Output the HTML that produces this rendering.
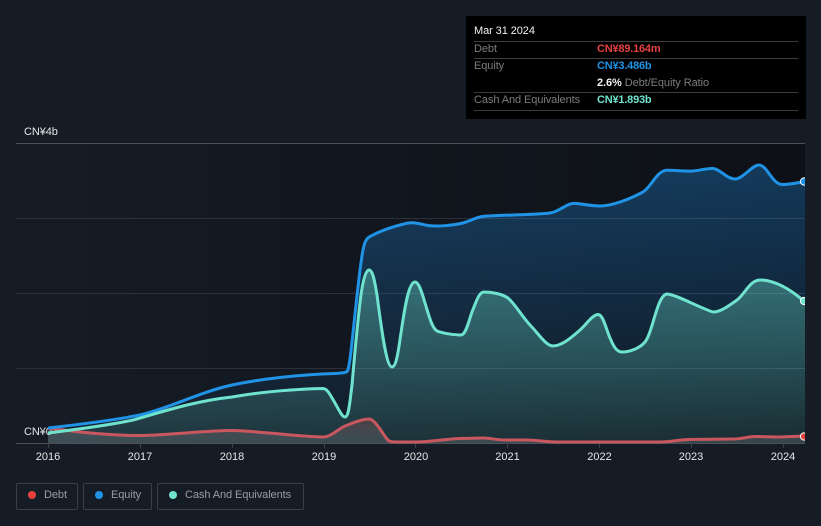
<!DOCTYPE html>
<html>
<head>
<meta charset="utf-8">
<style>
html,body{margin:0;padding:0;background:#151c26;}
body{width:821px;height:526px;overflow:hidden;position:relative;font-family:"Liberation Sans","Noto Sans CJK SC",sans-serif;}
svg{position:absolute;left:0;top:0;}
text{font-family:"Liberation Sans","Noto Sans CJK SC",sans-serif;}
.tip{position:absolute;left:466px;top:16px;width:340px;height:103px;background:#000;}
.hl{position:absolute;left:8px;width:324px;height:1px;background:#3d3d3d;}
.t{position:absolute;font-size:11px;line-height:14px;white-space:nowrap;color:#7d7d7d;letter-spacing:-.08px;}
.t.b{font-weight:bold;letter-spacing:-.2px;}
.lg{position:absolute;top:483px;height:25px;border:1px solid #3a3f49;border-radius:2px;box-sizing:content-box;}
.lg i{position:absolute;top:7px;left:11px;width:8px;height:8px;border-radius:50%;}
.lg span{position:absolute;left:27px;top:4px;font-size:11px;line-height:14px;color:#9a9da3;white-space:nowrap;letter-spacing:-.08px;}
</style>
</head>
<body>
<svg width="821" height="526" viewBox="0 0 821 526">
<defs>
<linearGradient id="bg" x1="0" x2="1" y1="0" y2="0"><stop offset="0" stop-color="#151c26"/><stop offset=".4" stop-color="#12171f"/><stop offset="1" stop-color="#0d1016"/></linearGradient>
<linearGradient id="eq" gradientUnits="userSpaceOnUse" x1="0" y1="165" x2="0" y2="443"><stop offset="0" stop-color="#2196f3" stop-opacity=".31"/><stop offset="1" stop-color="#2196f3" stop-opacity=".03"/></linearGradient>
<linearGradient id="ca" gradientUnits="userSpaceOnUse" x1="0" y1="270" x2="0" y2="443"><stop offset="0" stop-color="#6fe3ce" stop-opacity=".375"/><stop offset="1" stop-color="#6fe3ce" stop-opacity=".115"/></linearGradient>
<linearGradient id="de" gradientUnits="userSpaceOnUse" x1="0" y1="419" x2="0" y2="443"><stop offset="0" stop-color="#e64141" stop-opacity=".22"/><stop offset="1" stop-color="#ffffff" stop-opacity=".12"/></linearGradient>
<clipPath id="pc"><rect x="48" y="140" width="757" height="306"/></clipPath>
</defs>
<rect x="48" y="143" width="757" height="300" fill="url(#bg)"/>
<text x="24" y="135" font-size="11" letter-spacing="-.1" fill="#e6e6e6">CN¥4b</text>
<text x="24" y="435" font-size="11" letter-spacing="-.1" fill="#e6e6e6">CN¥0</text>
<g fill="#3c4049">
<rect x="16" y="143" width="789" height="1" fill="#4d5057"/>
<rect x="16" y="218" width="789" height="1" fill="#2b3039"/>
<rect x="16" y="293" width="789" height="1" fill="#2b3039"/>
<rect x="16" y="368" width="789" height="1" fill="#2b3039"/>
<rect x="16" y="443" width="789" height="1" fill="#4d5057"/>
<rect x="48" y="443" width="1" height="5"/><rect x="140" y="443" width="1" height="5"/><rect x="232" y="443" width="1" height="5"/><rect x="324" y="443" width="1" height="5"/><rect x="415" y="443" width="1" height="5"/><rect x="507" y="443" width="1" height="5"/><rect x="599" y="443" width="1" height="5"/><rect x="691" y="443" width="1" height="5"/><rect x="783" y="443" width="1" height="5"/>
</g>
<g clip-path="url(#pc)">
<path fill="url(#eq)" d="M48,428 C75,425 110,421 140,415 C170,408 200,392 232,385 C260,379 300,374.5 335,373.5 C342,373 346,373 347.5,371 C350,365 351,350 353,333 C356,305 360,265 363,250 C365,240 367,238 371,236 C380,231 395,226 408,223 C415,222 420,224 428,225.5 C438,227 455,225 463,223 C470,221 476,217.5 482,216.5 C495,215 530,215 545,213.5 C555,213 558,210 564,207 C569,204 572,203 577,203.5 C585,204.5 592,206 600,206 C612,206 630,199 643,192 C652,186 656,172 666,170.3 C675,170 685,171.5 693,171 C700,170.5 707,168 713,168.5 C720,169 727,179 735,179 C743,179 752,165 759,165 C767,165 772,184 782,184.5 C790,184.5 797,182.5 805,182 L805,443 L48,443 Z"/>
<path fill="url(#ca)" d="M48,433 C80,429 110,425 133,420 C165,411 195,401 232,397 C260,392 295,389 323,388.5 C328,389 330,395 335,403 C339,410 342,417 345,417 C349,417 350,400 352,385 C355,350 358,320 360,303 C362,285 365,270 369,270 C373,270 375,283 377,295 C381,325 386,367 392,367 C397,367 399,345 401,333 C405,305 409,282 415,282 C419,282 422,293 425,303 C429,316 432,328 437,331 C443,333.5 455,335 461,335 C466,335 469,320 472,312 C476,302 479,292 484,292 C492,292 502,294 508,298 C515,304 521,315 530,325 C538,333 546,346 553,346 C562,346 572,337 580,330 C586,325 592,315 598,314.5 C603,314 606,329 610,338 C613,345 616,352 622,352 C630,352 640,348 645,342 C653,332 657,295 667,294 C675,294 700,308 713,312 C720,312.5 730,305 737,300 C745,294 750,280 760,280 C775,280 790,289 805,302 L805,443 L48,443 Z"/>
<path fill="url(#de)" d="M48,428 C75,431.5 105,435.5 140,435.5 C170,435 205,430.5 232,430.5 C260,431 300,437 323,437 C330,437 336,431 343,427 C352,423 362,419 369,419 C375,419 382,433 387,439 C389,442 392,442 397,442 L417,442 C430,442 440,439.5 460,438.5 L483,438 C490,438 497,440 505,440 L527,440 C537,440 545,442 560,442 L660,442 C672,442 680,439.5 690,439.5 L733,439 C742,439 748,436.5 756,436.5 C765,436.5 772,437 780,437 L805,436 L805,443 L48,443 Z"/>
<g fill="none" stroke-width="3" stroke-linejoin="round" stroke-linecap="round">
<path stroke="#c9575f" d="M48,428 C75,431.5 105,435.5 140,435.5 C170,435 205,430.5 232,430.5 C260,431 300,437 323,437 C330,437 336,431 343,427 C352,423 362,419 369,419 C375,419 382,433 387,439 C389,442 392,442 397,442 L417,442 C430,442 440,439.5 460,438.5 L483,438 C490,438 497,440 505,440 L527,440 C537,440 545,442 560,442 L660,442 C672,442 680,439.5 690,439.5 L733,439 C742,439 748,436.5 756,436.5 C765,436.5 772,437 780,437 L805,436"/>
<path stroke="#2093e6" d="M48,428 C75,425 110,421 140,415 C170,408 200,392 232,385 C260,379 300,374.5 335,373.5 C342,373 346,373 347.5,371 C350,365 351,350 353,333 C356,305 360,265 363,250 C365,240 367,238 371,236 C380,231 395,226 408,223 C415,222 420,224 428,225.5 C438,227 455,225 463,223 C470,221 476,217.5 482,216.5 C495,215 530,215 545,213.5 C555,213 558,210 564,207 C569,204 572,203 577,203.5 C585,204.5 592,206 600,206 C612,206 630,199 643,192 C652,186 656,172 666,170.3 C675,170 685,171.5 693,171 C700,170.5 707,168 713,168.5 C720,169 727,179 735,179 C743,179 752,165 759,165 C767,165 772,184 782,184.5 C790,184.5 797,182.5 805,182"/>
<path stroke="#6fe3ce" d="M48,433 C80,429 110,425 133,420 C165,411 195,401 232,397 C260,392 295,389 323,388.5 C328,389 330,395 335,403 C339,410 342,417 345,417 C349,417 350,400 352,385 C355,350 358,320 360,303 C362,285 365,270 369,270 C373,270 375,283 377,295 C381,325 386,367 392,367 C397,367 399,345 401,333 C405,305 409,282 415,282 C419,282 422,293 425,303 C429,316 432,328 437,331 C443,333.5 455,335 461,335 C466,335 469,320 472,312 C476,302 479,292 484,292 C492,292 502,294 508,298 C515,304 521,315 530,325 C538,333 546,346 553,346 C562,346 572,337 580,330 C586,325 592,315 598,314.5 C603,314 606,329 610,338 C613,345 616,352 622,352 C630,352 640,348 645,342 C653,332 657,295 667,294 C675,294 700,308 713,312 C720,312.5 730,305 737,300 C745,294 750,280 760,280 C775,280 790,289 805,302"/>
</g>
<circle cx="804" cy="181.5" r="3.6" fill="#2093e6" stroke="#fff" stroke-width="1"/>
<circle cx="804" cy="301" r="3.6" fill="#6fe3ce" stroke="#fff" stroke-width="1"/>
<circle cx="804" cy="436.5" r="3.6" fill="#e64141" stroke="#fff" stroke-width="1"/>
</g>
<g font-size="11" fill="#e6e6e6" text-anchor="middle">
<text x="48" y="460">2016</text><text x="140" y="460">2017</text><text x="232" y="460">2018</text><text x="324" y="460">2019</text><text x="416" y="460">2020</text><text x="507.5" y="460">2021</text><text x="599.5" y="460">2022</text><text x="691" y="460">2023</text><text x="783" y="460">2024</text>
</g>
</svg>

<div class="tip">
<div class="t" style="left:8px;top:8px;color:#f2f2f2;">Mar 31 2024</div>
<div class="hl" style="top:25px;"></div>
<div class="t" style="left:8px;top:26px;">Debt</div>
<div class="t b" style="left:131px;top:26px;color:#e64141;">CN¥89.164m</div>
<div class="hl" style="top:42px;"></div>
<div class="t" style="left:8px;top:43px;">Equity</div>
<div class="t b" style="left:131px;top:43px;color:#2093e6;">CN¥3.486b</div>
<div class="t" style="left:131px;top:60px;"><b style="color:#f2f2f2;">2.6%</b> Debt/Equity Ratio</div>
<div class="hl" style="top:76px;"></div>
<div class="t" style="left:8px;top:77px;">Cash And Equivalents</div>
<div class="t b" style="left:131px;top:77px;color:#6fe3ce;">CN¥1.893b</div>
<div class="hl" style="top:94px;"></div>
</div>

<div class="lg" style="left:16px;width:60px;"><i style="background:#e64141;"></i><span>Debt</span></div>
<div class="lg" style="left:83px;width:67px;"><i style="background:#2093e6;"></i><span>Equity</span></div>
<div class="lg" style="left:157px;width:145px;"><i style="background:#6fe3ce;"></i><span>Cash And Equivalents</span></div>
</body>
</html>
